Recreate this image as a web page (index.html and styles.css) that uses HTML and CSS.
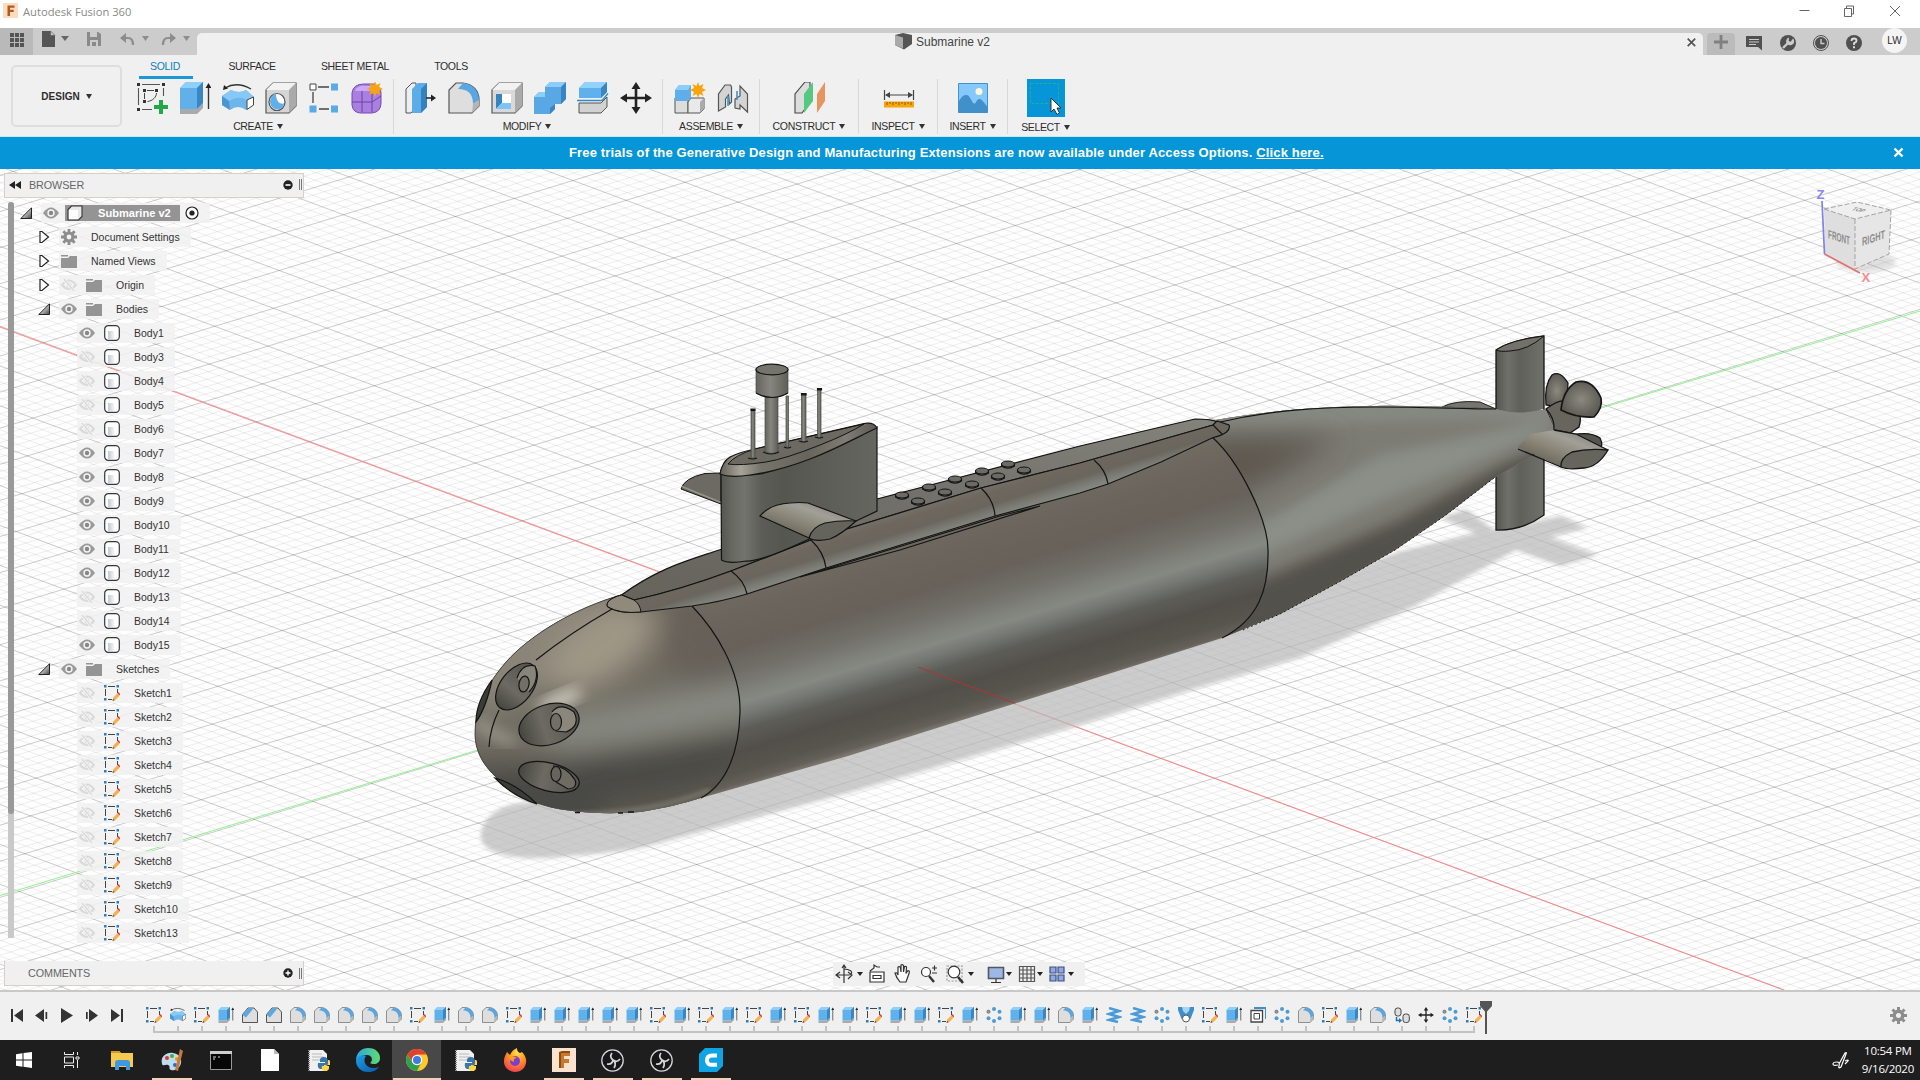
FILE: index.html
```html
<!DOCTYPE html>
<html lang="en">
<head>
<meta charset="utf-8">
<title>Autodesk Fusion 360</title>
<link rel="stylesheet" href="styles.css">
</head>
<body>
<svg class="defs" width="0" height="0">
  <defs>
    <linearGradient id="tri" x1="0" y1="0" x2="1" y2="1"><stop offset=".3" stop-color="#eee"/><stop offset="1" stop-color="#444"/></linearGradient>
    <linearGradient id="bodyFill"><stop offset="0" stop-color="#c5c8d2"/><stop offset="1" stop-color="#f4f4f6"/></linearGradient>
    <radialGradient id="fox" cx=".6" cy=".2" r=".9"><stop offset="0" stop-color="#ffe14a"/><stop offset=".4" stop-color="#ff9a1f"/><stop offset="1" stop-color="#f0305a"/></radialGradient>
    <linearGradient id="edgeg" x1="0" y1="0" x2="1" y2="1"><stop offset="0" stop-color="#1ba0e8"/><stop offset="1" stop-color="#0c59a4"/></linearGradient>
    <linearGradient id="edgeg2" x1="0" x2="1"><stop offset="0" stop-color="#2ba7e6"/><stop offset="1" stop-color="#5fdc6c"/></linearGradient>
  </defs>
  <!-- ribbon -->
  <symbol id="r-sketch" viewBox="0 0 32 32"><path d="M6 2.500h18M2.500 6v17M27.500 6v8M6 27.500h10" fill="none" stroke="#555" stroke-width="1.100"/><path d="M11 8.500h7M8.500 11v6M20.500 11c0 4-4 8-9 8.500" fill="none" stroke="#444"/><path d="M1 1h3v3H1zM26 1h3v3h-3zM1 26h3v3H1zM7 7h3v3H7zM19 7h3v3h-3zM7 18h3v3H7z" fill="#333"/><path d="M23 18h4v5h5v4h-5v5h-4v-5h-5v-4h5z" fill="#20a84b"/></symbol>
  <symbol id="r-extrude" viewBox="0 0 32 32"><path d="M1 27h17l6-6v5l-6 6H1z" fill="#aaa"/><path d="M1 6l6-6h17v21l-6 6H1z" fill="#62b0ea"/><path d="M1 6l6-6h17l-6 6z" fill="#8fd0fb"/><path d="M18 6l6-6v21l-6 6z" fill="#3a86c4"/><path d="M29.500 27V4" stroke="#333" stroke-width="1.400"/><path d="M26.500 6l3-5 3 5z" fill="#222"/></symbol>
  <symbol id="r-revolve" viewBox="0 0 32 32"><path d="M3 6q12-7 26 1" fill="none" stroke="#333" stroke-width="1.400"/><path d="M1 8l1-5 4 3.500z" fill="#222"/><path d="M0 14l9-6q8 4 15 0l8 7v8l-8 5q-8-6-16 0l-8-5z" fill="#6db6ec"/><path d="M0 14l9-6q8 4 15 0l8 7-7 3q-9-5-18 1z" fill="#86c9f7"/><path d="M0 14l7 5 1 9-8-5z" fill="#4a96d2"/><path d="M25 18l6.500-3v8l-6.500 4.500z" fill="#fff" stroke="#444"/></symbol>
  <symbol id="r-hole" viewBox="0 0 32 32"><path d="M1 8l7-7h23v23l-7 7H1z" fill="#d5d5d5" stroke="#555" stroke-width="1.200"/><path d="M1 8l7-7h23l-7 7z" fill="#f2f2f2"/><path d="M24 8l7-7v23l-7 7z" fill="#aaa"/><ellipse cx="12" cy="20" rx="8" ry="8.500" fill="#fff" stroke="#555" stroke-width="1.200"/><path d="M11 12c-8 2-8 14 1 15.500 4 0 7-3 7-6-5 1-8-3-8-9.500z" fill="#62b0ea"/></symbol>
  <symbol id="r-pattern" viewBox="0 0 32 32"><path d="M10 5h11M5 10v11M11 27h10" fill="none" stroke="#444" stroke-width="1.300"/><path d="M2 2h6v6H2z" fill="#fff" stroke="#444"/><path d="M23 1.500h7v7h-7zM1.500 23.500h7v7h-7zM23 23.500h7v7h-7z" fill="#5aaae6"/></symbol>
  <symbol id="r-form" viewBox="0 0 32 32"><path d="M1 11q1-9 12-9h9q8 2 8 9v10q0 9-9 10H10q-8 0-9-8z" fill="#a97fe0" stroke="#7848b4"/><path d="M1 20h20l9-6M11 9v21M21 10v20" fill="none" stroke="#6b42a8"/><path d="M4 8q4-5 10-4h8l-3 5H5z" fill="#cba9f6"/><use href="#star" x="16" y="-1" width="16" height="16"/></symbol>
  <symbol id="star" viewBox="0 0 16 16"><path d="M8 0l1.500 4L13.500 2 12 6l4 2-4 2 1.500 4-4-2L8 16l-1.500-4-4 2L4 10 0 8l4-2-1.500-4 4 2z" fill="#f8a410"/></symbol>
  <symbol id="r-press" viewBox="0 0 32 32"><path d="M1 7l6-6h4v24l-5 6H1z" fill="#eee" stroke="#555"/><path d="M7 7l6-6h9v24l-6 6H7z" fill="#5dacea"/><path d="M16 7l6-6v24l-6 6z" fill="#3580bd"/><path d="M21 16h8" stroke="#222" stroke-width="1.500"/><path d="M26 12.500l5 3.500-5 3.500z" fill="#222"/></symbol>
  <symbol id="r-fillet" viewBox="0 0 32 32"><path d="M1 31V8l7-7h7c10 1 16 8 16 17v6l-7 7z" fill="#dedede" stroke="#555" stroke-width="1.200"/><path d="M15 1c10 1 16 8 16 17l-6 4c0-10-5-15-15-15z" fill="#58a6e2"/><path d="M25 22l6-4v6l-7 7z" fill="#b5b5b5"/></symbol>
  <symbol id="r-shell" viewBox="0 0 32 32"><path d="M1 8l7-7h23v23l-7 7H1z" fill="#d9d9d9" stroke="#555" stroke-width="1.200"/><path d="M1 8l7-7h23l-7 7z" fill="#f2f2f2"/><path d="M24 8l7-7v23l-7 7z" fill="#aaa"/><path d="M5 12h15v15H5z" fill="#fff"/><path d="M5 12h6v9l-6 6z" fill="#3583c2"/><path d="M5 27l6-6h9v6z" fill="#7cc3f6"/></symbol>
  <symbol id="r-combine" viewBox="0 0 32 32"><path d="M0 15l5-5h6V5l5-5h16v17l-5 5h-6v5l-5 5H0z" fill="#59a8e4"/><path d="M11 5l5-5h16l-5 5zM0 15l5-5h6v5z" fill="#8dcdf9"/><path d="M27 5l5-5v17l-5 5zM16 26l5-4v5l-5 5z" fill="#3985c3"/></symbol>
  <symbol id="r-split" viewBox="0 0 32 32"><path d="M2 6l6-6h22v10l-6 6H2z" fill="#5fb0ec"/><path d="M2 6l6-6h22l-6 6z" fill="#92d2fb"/><path d="M24 6l6-6v10l-6 6z" fill="#3a86c4"/><path d="M0 18.500h25l6-7" fill="none" stroke="#2f8ccb" stroke-width="1.400"/><path d="M2 21h22l6-6v10l-6 6H2z" fill="#d2d2d2" stroke="#555"/></symbol>
  <symbol id="r-move" viewBox="0 0 32 32"><path d="M16 4v24M4 16h24" stroke="#222" stroke-width="2.600"/><path d="M16 0l4.500 7h-9zM16 32l4.500-7h-9zM0 16l7-4.500v9zM32 16l-7-4.500v9z" fill="#222"/></symbol>
  <symbol id="r-comp" viewBox="0 0 32 32"><path d="M1 16h13v15H1z" fill="#ddd" stroke="#555"/><path d="M14 20l3-4h13v11l-4 4H14z" fill="#e9e9e9" stroke="#555"/><path d="M26 20l4-4v11l-4 4z" fill="#aaa"/><path d="M1 8l4-5h12v13l-3 3H1z" fill="#5faee9"/><path d="M1 8l4-5h12l-3 5z" fill="#8dcdf9"/><use href="#star" x="16" y="0" width="16" height="16"/></symbol>
  <symbol id="r-joint" viewBox="0 0 32 32"><path d="M1.500 29V12L8 3h5.500l1 2v15l-2 2-1-9-3 4v8z" fill="#d4d4d4" stroke="#555" stroke-width="1.200"/><path d="M30.500 30V12L23 4v10l-5 3v9l5 1v-4z" fill="#d4d4d4" stroke="#555" stroke-width="1.200"/><path d="M11 14v10M20 9v9" stroke="#3b93d4" stroke-width="1.600"/></symbol>
  <symbol id="r-construct" viewBox="0 0 32 32"><path d="M1 31V12L11 0h5v20L8 31z" fill="#ddd" stroke="#444" stroke-width="1.100"/><path d="M10 12l9-12v19l-9 12z" fill="#55c980"/><path d="M23 12l8-12v19l-8 12z" fill="#e8945e"/></symbol>
  <symbol id="r-inspect" viewBox="0 0 32 32"><path d="M1.500 8v10M30.500 8v10M3 13h26" stroke="#444" stroke-width="1.200"/><path d="M2 13l5-3v6zM30 13l-5-3v6z" fill="#444"/><path d="M1 19.500h30v6H1z" fill="#f9a60c"/><path d="M4 20v3M7 20v2M10 20v3M13 20v2M16 20v3M19 20v2M22 20v3M25 20v2M28 20v3" stroke="#8a5a00"/></symbol>
  <symbol id="r-insert" viewBox="0 0 32 32"><path d="M1.500 1.500h29v29h-29z" fill="#86c8fb" stroke="#3e93d0"/><circle cx="22" cy="9.500" r="3.500" fill="#fff8d8"/><path d="M1.500 20q4-8 8-7c4 0 6 11 9 8 3-6 5-6 12 4v5.500h-29z" fill="#4190ca"/></symbol>
  <symbol id="r-select" viewBox="0 0 38 38"><path d="M3.500 4.500h28v20h-28z" fill="none" stroke="#2fb08c" stroke-dasharray="3 1.500" opacity=".75"/><path d="M24 19v14l3-3 3 5.500 2.500-1.500-2.500-5h4z" fill="#fff" stroke="#222" stroke-width=".9"/></symbol>
  <!-- browser tree -->
  <symbol id="eye" viewBox="0 0 16 12"><path d="M0 6q8-11 16 0-8 11-16 0z" fill="#999"/><circle cx="8" cy="6" r="3.700" fill="#f4f4f4"/><circle cx="8" cy="6" r="2.200" fill="#888"/></symbol>
  <symbol id="hidden" viewBox="0 0 16 12"><path d="M1 6q7-9 14 0-7 8-14 0z" fill="none" stroke="#dadada" stroke-width="2"/><circle cx="8" cy="6" r="2.500" fill="#dedede"/><path d="M3 0l10 12" stroke="#f4f4f4" stroke-width="3"/><path d="M3 0l10 12" stroke="#d8d8d8" stroke-width="1.300"/></symbol>
  <symbol id="body" viewBox="0 0 16 16"><rect x=".7" y=".7" width="14.600" height="14.600" rx="3.600" fill="#fff" stroke="#34373d" stroke-width="1.200"/><rect x="4" y="6" width="6" height="8" fill="url(#bodyFill)"/></symbol>
  <symbol id="cube" viewBox="0 0 16 16"><path d="M1 4.500L4.500 1H15v10.500L11.500 15H1z" fill="#e8e8e8" stroke="#333" stroke-width="1.100"/><path d="M2 5h9v9H2z" fill="#fff"/></symbol>
  <symbol id="folder" viewBox="0 0 16 14"><path d="M0 1h7v1.600H0zM0 4h7l2-2h7v12H0z" fill="#949494"/></symbol>
  <symbol id="gear" viewBox="0 0 16 16"><circle cx="8" cy="8" r="4" fill="none" stroke="#8d8d8d" stroke-width="3.200"/><path d="M8 0v3M8 13v3M0 8h3M13 8h3M2.300 2.300l2.200 2.200M11.500 11.500l2.200 2.200M2.300 13.700l2.200-2.200M11.500 4.500l2.200-2.200" stroke="#8d8d8d" stroke-width="2.800"/></symbol>
  <symbol id="closed" viewBox="0 0 12 14"><path d="M2 1.500h2l6.500 5.500L4 12.500H2z" fill="#fff" stroke="#222" stroke-width="1.200"/></symbol>
  <symbol id="open" viewBox="0 0 12 12"><path d="M11.500 .8v10.700H.8z" fill="url(#tri)" stroke="#222"/></symbol>
  <symbol id="sketch" viewBox="0 0 16 16"><path d="M4 1.500h7M1.500 4v7M13.500 4v4M4 14.500h4" fill="none" stroke="#444"/><path d="M0 0h2.500v2.500H0zM12.500 0H15v2.500h-2.500zM0 13h2.500v2.500H0z" fill="#2d7cc0"/><path d="M8.500 15.800l1-3.600 4-4 2.300 2.300-4.500 4.500z" fill="#f5b14b"/><path d="M13.300 8l1-1 2 2.200-1 1z" fill="#dd3a4a"/><path d="M8.500 16l.6-2.200 1.500 1.500z" fill="#555"/></symbol>
  <!-- timeline -->
  <symbol id="chamfer" viewBox="0 0 32 32"><path d="M1 31V15L12 2h12l7 8v21z" fill="#dedede" stroke="#555" stroke-width="2"/><path d="M1 16L13 2l9 2L8 21z" fill="#5aa9e4"/></symbol>
  <symbol id="circ" viewBox="0 0 16 16"><g fill="#4d9ad6"><circle cx="8" cy="2" r="2"/><circle cx="13.500" cy="4.700" r="2"/><circle cx="13.500" cy="11.300" r="2"/><circle cx="8" cy="14" r="2"/><circle cx="2.500" cy="11.300" r="2"/></g><circle cx="2.500" cy="4.700" r="1.600" fill="#999" stroke="#666" stroke-width=".7"/></symbol>
  <symbol id="coil" viewBox="0 0 16 16"><path d="M3 1l10 3-10 3 10 3-10 3 9 2" fill="none" stroke="#4a9bd8" stroke-width="2.500"/></symbol>
  <symbol id="loft" viewBox="0 0 16 16"><path d="M0 0h16v3l-3.500 9h-9L0 3z" fill="#3f8dca"/><path d="M4 0h8l-1 4-3 3-3-3z" fill="#a5d4f5"/><circle cx="8" cy="11.500" r="3.500" fill="#fff" stroke="#555"/></symbol>
  <symbol id="offset" viewBox="0 0 16 16"><path d="M4 1h12v11" fill="none" stroke="#3f8fcc" stroke-width="2"/><path d="M1 3.500h11.500V15H1z" fill="#fff" stroke="#444" stroke-width="1.300"/><path d="M4 6.500h5.500V12H4z" fill="none" stroke="#444"/></symbol>
  <symbol id="align" viewBox="0 0 16 16"><rect x="1" y="1" width="6" height="8" rx="2.500" fill="#ddd" stroke="#444"/><rect x="9" y="7" width="6.300" height="8.500" rx="2.500" fill="#ddd" stroke="#444"/><path d="M2.500 10v3.500H6" fill="none" stroke="#1d6fb0" stroke-width="1.500"/><path d="M5 11l3 2.500L5 16z" fill="#1d6fb0"/></symbol>
</svg>

<header class="titlebar">
  <svg width="15" height="15" viewBox="0 0 15 15"><path d="M0 0h15v15H0z" fill="#fbdcc3"/><path d="M4.500 13V2.500h7v2.300H7v2h3.700V9H7v4z" fill="#b25a1a"/></svg>
  <span class="app-name">Autodesk Fusion 360</span>
  <svg class="winbtns" width="106" height="14" viewBox="0 0 106 14" fill="none" stroke="#666"><path d="M1.500 6.500h10M46.500 4.500h7v8h-7zM48.500 4.500v-2.500h7v8h-2M92 2l10 10M102 2L92 12"/></svg>
</header>

<div class="appbar">
  <div class="grid-btn"><svg width="14" height="14" viewBox="0 0 14 14" fill="#555"><path d="M0 0h4v4H0zM5 0h4v4H5zM10 0h4v4h-4zM0 5h4v4H0zM5 5h4v4H5zM10 5h4v4h-4zM0 10h4v4H0zM5 10h4v4H5zM10 10h4v4h-4z"/></svg></div>
  <svg class="quick" width="150" height="22" viewBox="0 0 150 22"><path d="M0 3h8l5 4.500V19H0z" fill="#555"/><path d="M8.500 3v4.500H13z" fill="#ccc" stroke="#555" stroke-width=".6"/><path d="M19 8h8l-4 5z" fill="#666"/><path d="M45 4h11l3 2v12H45z" fill="#8a8a8a"/><path d="M48 4h7v5h-7zM48 12h8v6h-8z" fill="#ccc"/><path d="M50 14h4v4h-4z" fill="#8a8a8a"/><g fill="none" stroke="#8d8d8d" stroke-width="2.200"><path d="M81 10h5q5 0 5 7M131 10h-5q-5 0-5 7"/></g><path d="M78 10l6-5v10zM134 10l-6-5v10zM100 8h7l-3.500 5zM141 8h7l-3.500 5z" fill="#8d8d8d"/></svg>
  <div class="doc-tab">
    <svg width="17" height="17" viewBox="0 0 17 17"><path d="M0 2l8-2 9 2v9l-8 5.500L0 12z" fill="#555"/><path d="M0 2l8 2.500v11L0 12z" fill="#aaa"/></svg>
    <span>Submarine v2</span>
    <svg class="tab-x" width="9" height="9" viewBox="0 0 9 9" stroke="#555" stroke-width="1.700"><path d="M.7.7l7.500 7.500M8.200.7L.7 8.200"/></svg>
  </div>
  <div class="plus"><svg width="14" height="14" viewBox="0 0 14 14"><path d="M7 0v14M0 7h14" stroke="#808080" stroke-width="2.800"/></svg></div>
  <div class="app-icons">
    <svg width="17" height="16" viewBox="0 0 17 16"><path d="M0 1h16v11l0 3.500-4-3.500H0z" fill="#505050"/><path d="M3 4.500h10M3 7h10M3 9.500h7" stroke="#ccc" stroke-width="1.200"/></svg>
    <svg width="16" height="16" viewBox="0 0 16 16"><circle cx="8" cy="8" r="8" fill="#505050"/><path d="M3 13l6-6" stroke="#ccc" stroke-width="2.400"/><path d="M13 3.500a4 4 0 1 1-4-1L8.700 6l2 .8z" fill="#ccc"/></svg>
    <svg width="16" height="16" viewBox="0 0 16 16"><circle cx="8" cy="8" r="7.500" fill="none" stroke="#505050"/><circle cx="8" cy="8" r="6" fill="#505050"/><path d="M8 4v4.500h3.500" fill="none" stroke="#ccc" stroke-width="1.400"/></svg>
    <svg width="16" height="16" viewBox="0 0 16 16"><circle cx="8" cy="8" r="8" fill="#505050"/><path d="M5.500 6q0-2.500 2.500-2.500t2.500 2.200Q10.500 7.200 8 8.200V10" fill="none" stroke="#ddd" stroke-width="1.800"/><path d="M7 11.300h2v2H7z" fill="#ddd"/></svg>
  </div>
  <div class="avatar">LW</div>
</div>

<div class="ribbon">
  <div class="design"><span>DESIGN</span><i class="dd"></i></div>
  <div class="ribbon-main">
    <nav class="tabs"><span class="tab on">SOLID</span><span class="tab t2">SURFACE</span><span class="tab t3">SHEET METAL</span><span class="tab t4">TOOLS</span></nav>
    <div class="groups">
      <section class="group g-create"><div class="tools"><svg><use href="#r-sketch"/></svg><svg><use href="#r-extrude"/></svg><svg><use href="#r-revolve"/></svg><svg><use href="#r-hole"/></svg><svg><use href="#r-pattern"/></svg><svg><use href="#r-form"/></svg></div><p>CREATE<i class="dd"></i></p></section>
      <section class="group g-modify"><div class="tools"><svg><use href="#r-press"/></svg><svg><use href="#r-fillet"/></svg><svg><use href="#r-shell"/></svg><svg><use href="#r-combine"/></svg><svg><use href="#r-split"/></svg><svg><use href="#r-move"/></svg></div><p>MODIFY<i class="dd"></i></p></section>
      <section class="group g-assemble"><div class="tools"><svg><use href="#r-comp"/></svg><svg><use href="#r-joint"/></svg></div><p>ASSEMBLE<i class="dd"></i></p></section>
      <section class="group g-construct"><div class="tools"><svg><use href="#r-construct"/></svg></div><p>CONSTRUCT<i class="dd"></i></p></section>
      <section class="group g-inspect"><div class="tools"><svg><use href="#r-inspect"/></svg></div><p>INSPECT<i class="dd"></i></p></section>
      <section class="group g-insert"><div class="tools"><svg><use href="#r-insert"/></svg></div><p>INSERT<i class="dd"></i></p></section>
      <section class="group g-select"><div class="tools"><svg class="sel"><use href="#r-select"/></svg></div><p>SELECT<i class="dd"></i></p></section>
    </div>
  </div>
</div>

<div class="banner"><p>Free trials of the Generative Design and Manufacturing Extensions are now available under Access Options. <a>Click here.</a></p>
  <svg class="banner-x" width="11" height="11" viewBox="0 0 11 11" stroke="#fff" stroke-width="2.400"><path d="M1.500 1.500l8 8M9.500 1.500l-8 8"/></svg></div>

<main class="viewport">
  <svg class="scene" viewBox="0 169 1920 821" width="1920" height="821">
    <defs>
      <linearGradient id="hull" gradientUnits="userSpaceOnUse" x1="226.300" y1="740.900" x2="283.200" y2="927.300">
        <stop offset="0" stop-color="#716c62"/><stop offset=".15" stop-color="#6a645c"/><stop offset=".31" stop-color="#67615a"/><stop offset=".44" stop-color="#72706a"/><stop offset=".53" stop-color="#7f817a"/><stop offset=".585" stop-color="#858982"/><stop offset=".64" stop-color="#767974"/><stop offset=".72" stop-color="#5d5d58"/><stop offset=".82" stop-color="#524f4a"/><stop offset=".92" stop-color="#58544e"/><stop offset=".975" stop-color="#65605a"/><stop offset="1" stop-color="#7c776e"/>
      </linearGradient>
      <linearGradient id="strip" gradientUnits="userSpaceOnUse" x1="218.400" y1="715.100" x2="229.500" y2="751.400">
        <stop offset="0" stop-color="#7a776f"/><stop offset=".35" stop-color="#6d675e"/><stop offset=".65" stop-color="#6b665d"/><stop offset=".85" stop-color="#7a7b74"/><stop offset="1" stop-color="#84877f"/>
      </linearGradient>
      <linearGradient id="deck" x1="0" y1="1" x2="1" y2="0"><stop offset="0" stop-color="#66635b"/><stop offset=".5" stop-color="#716f69"/><stop offset="1" stop-color="#83837c"/></linearGradient>
      <linearGradient id="sail"><stop offset="0" stop-color="#55554f"/><stop offset=".07" stop-color="#686862"/><stop offset=".15" stop-color="#74746e"/><stop offset=".26" stop-color="#5d5d57"/><stop offset=".4" stop-color="#565650"/><stop offset="1" stop-color="#65665f"/></linearGradient>
      <linearGradient id="rim" gradientUnits="userSpaceOnUse" x1="722" y1="0" x2="877" y2="0"><stop offset="0" stop-color="#6c685f"/><stop offset=".12" stop-color="#a7a398"/><stop offset=".25" stop-color="#77746b"/><stop offset=".55" stop-color="#68645c"/><stop offset=".8" stop-color="#7e7c74"/><stop offset="1" stop-color="#5a5a54"/></linearGradient>
      <linearGradient id="mast"><stop offset="0" stop-color="#65655f"/><stop offset=".45" stop-color="#86867f"/><stop offset="1" stop-color="#5f5f59"/></linearGradient>
      <linearGradient id="fin" x1="0" y1="1" x2="1" y2="0"><stop offset=".1" stop-color="#5c584f"/><stop offset=".45" stop-color="#8c877a"/><stop offset=".65" stop-color="#a19f97"/><stop offset="1" stop-color="#716f67"/></linearGradient>
      <linearGradient id="rudder"><stop offset="0" stop-color="#555650"/><stop offset=".25" stop-color="#6f706a"/><stop offset=".5" stop-color="#5f605a"/><stop offset="1" stop-color="#70716b"/></linearGradient>
      <radialGradient id="blade"><stop offset="0" stop-color="#8d897f"/><stop offset="1" stop-color="#5d5b55"/></radialGradient>
      <linearGradient id="tube"><stop offset="0" stop-color="#45453f"/><stop offset=".4" stop-color="#6c6a62"/><stop offset="1" stop-color="#55534e"/></linearGradient>
      <filter id="soft" x="-30%" y="-30%" width="160%" height="160%"><feGaussianBlur stdDeviation="7"/></filter>
      <filter id="softer" x="-50%" y="-50%" width="200%" height="200%"><feGaussianBlur stdDeviation="14"/></filter>
      <filter id="edge"><feGaussianBlur stdDeviation="2"/></filter>
      <clipPath id="hullClip"><path d="M621 595C575 608 530 635 506 662C482 690 475 712 475 735C476 765 500 785 536 803C560 812 600 815 640 812C665 808 685 803 701 798L848 756L1080 683L1222 638L1280 614L1339 582L1395 550L1446 515L1494 478L1530 457L1556 432L1546 410C1500 410 1430 405 1376 406C1320 406 1260 412 1216 420L1195 419L1080 446L877 499L722 550C690 562 650 580 621 595z"/></clipPath>
      <clipPath id="noseClip"><path d="M692 606C715 630 741 670 740 712C739 755 725 785 701 798L640 830H450V585L640 585z"/></clipPath>
      <clipPath id="tailClip"><path d="M1212 437C1240 462 1268 520 1268 550C1269 590 1258 620 1222 638L1240 650H1600V380H1180z"/></clipPath>
    </defs>
    <path class="minor" id="minorLines"/>
    <path class="major" id="majorLines"/>
    <path d="M0 327L1784 990" stroke="#ff8585" fill="none"/>
    <path d="M0 895.500L1920 311" stroke="#8cf58c" fill="none"/>
    <path filter="url(#edge)" opacity=".72" fill="#b9b9b9" d="M522 803C492 806 480 824 481 838C484 858 530 861 570 856C600 854 625 851 644 847L848 793L1080 725L1191 690L1302 657L1413 607L1516 550L1561 566L1598 555L1550 537L1588 528L1561 516L1494 530L1466 509L1441 518L1476 533L1398 552L1300 590L700 780z"/>

    <path d="M1442 407Q1455 400 1480 402L1496 409z" fill="#77766e" stroke="#222"/>
    <g stroke="#161616" stroke-width="1.300">
      <path d="M1496 470V530Q1522 531 1544 515V450z" fill="url(#rudder)"/>
      <path d="M1572 435Q1590 431 1600 438Q1604 446 1599 450z" fill="#55554f"/>
      <path d="M1546 405Q1544 385 1552 375Q1560 370 1568 383Q1568 395 1562 408z" fill="url(#blade)"/>
      <path d="M1546 409Q1558 400 1564 401Q1585 409 1579 427L1570 433L1554 430z" fill="#67655d"/>
      <path d="M1561 410Q1563 390 1576 382Q1592 378 1601 398Q1603 408 1594 417Q1576 418 1561 410z" fill="url(#blade)" stroke-width="1.700"/>
    </g>
    <g clip-path="url(#hullClip)">
      <path d="M440 390H1600V840H440z" fill="url(#hull)"/>
      <g clip-path="url(#noseClip)">
        <path d="M440 560H780V840H440z" fill="#706b61"/>
        <g filter="url(#softer)">
          <path d="M450 590L610 590L660 625L560 680L480 720z" fill="#8a8578"/>
          <path d="M660 600L780 590L780 690L690 690L660 650z" fill="#666059"/>
          <ellipse cx="602" cy="648" rx="62" ry="30" transform="rotate(-35 602 648)" fill="#9f9786"/>
          <path d="M530 722Q600 712 760 675V715Q650 742 560 748z" fill="#888b84"/>
          <path d="M440 765Q520 770 600 755L780 728V850H440z" fill="#494844"/>
          <path d="M600 800Q680 790 760 760V850H600z" fill="#5a564f"/>
        </g>
        <ellipse cx="560" cy="700" rx="24" ry="7" transform="rotate(-22 560 700)" fill="#d2cec4" filter="url(#soft)"/>
        <path d="M475 720Q490 735 515 742" stroke="#a29e92" stroke-width="9" fill="none" filter="url(#soft)"/>
        <path d="M560 815Q650 815 710 790" stroke="#77736a" stroke-width="5" fill="none" filter="url(#edge)"/>
      </g>
      <g clip-path="url(#tailClip)">
        <path d="M1180 380H1600V660H1180z" fill="#7c7b74"/>
        <g filter="url(#soft)">
          <path d="M1180 415L1300 400L1560 404V418L1360 422L1210 436z" fill="#878a83"/>
          <path d="M1180 582L1268 553L1380 502L1556 428L1540 422L1380 455L1268 520L1180 545z" fill="#8b8f88"/>
          <path d="M1180 610L1268 577L1400 520L1500 466L1560 440V520L1300 640L1180 670z" fill="#53514c"/>
        </g>
        <path d="M1170 450L1230 434L1340 438L1280 475L1170 530z" fill="#5f5850" filter="url(#softer)"/>
        <path d="M1225 642L1285 617L1395 555L1446 520" stroke="#77736a" stroke-width="5" fill="none" filter="url(#edge)"/>
      </g>
      <path d="M918 667L1080 727.500" stroke="#b03434" fill="none"/>
    </g>
    <g fill="none" stroke="#141414" stroke-width="1.200">
      <path d="M621 595C575 608 530 635 506 662C482 690 475 712 475 735C476 765 500 785 536 803" stroke-width=".8" stroke="#33332f"/>
      <path d="M692 606C715 630 741 670 740 712C739 755 725 785 701 798"/>
      <path d="M1212 437C1240 462 1268 520 1268 550C1269 590 1258 620 1222 638"/>
      <path d="M612 609Q570 633 536 660M499 710Q490 728 489 747"/>
      <path d="M1216 423C1270 410 1320 407 1376 407C1430 407 1460 409 1496 409"/>
      <path d="M1243 630L1280 614L1339 582L1395 550L1446 515L1494 478" stroke-dasharray="1.500 3" stroke-width="1"/>
      <path d="M575 812.500h5M618 813h5M628 812h6" stroke-width="1.500"/>
      <path d="M1546 409Q1555 418 1554 430"/>
    </g>

    <path d="M621.500 595C660 567 690 560 722 549L877 499L1080 446L1195 419Q1212 419 1217 422L1213 425L1080 463L981 488L811 540L731 571Q680 590 634 600z" fill="url(#deck)" stroke="#141414" stroke-width="1.200"/>
    <path d="M621.500 595C610 598 605 603 608 607Q620 614 641 612L692 606Q720 602 747 594L826 568L995 516L1080 493L1108 484L1161 462L1212 438Q1232 433 1229 425L1217 421L1213 425L1080 463L981 488L811 540L731 571Q680 590 634 600z" fill="url(#strip)" stroke="#141414" stroke-width="1.200"/>
    <path d="M621.500 595C610 598 605 603 608 607Q620 614 641 612Q640 604 634 600z" fill="#8f8a7b" stroke="#141414"/>
    <g fill="none" stroke="#141414" stroke-width="1.200"><path d="M731 571Q744 580 747 594M811 540Q824 552 826 568M981 488Q994 500 995 516M1094 460Q1106 470 1108 484M1213 425L1222 434M800 577L1000 516L1040 506L900 550z"/></g>
    <g id="hatches" fill="#6b6a64" stroke="#141414" stroke-width="1.100"></g>

    <path d="M681 489Q684 478 705 473.500L721 473V504z" fill="#6c6a62" stroke="#141414"/>
    <path d="M682 486.500L721 502.500" stroke="#99958b" stroke-width="1.500"/>
    <path d="M721 470L725 466Q735 478 760 474C800 465 850 440 877 427V511L856 521L807 540Q760 562 746 561Q728 564 721.500 560z" fill="url(#sail)" stroke="#141414" stroke-width="1.200"/>
    <path d="M720 474Q722 462 730 457Q740 452 755 449L864 423.500Q874 422 877 428C850 440 807 467 750 475Q730 478 720 474z" fill="url(#rim)" stroke="#141414" stroke-width="1.200"/>
    <path d="M728 464Q735 455 755 449L864 424Q848 434 820 445Q785 459 766 462Q740 466 728 464z" fill="#6b6962" stroke="#141414"/>
    <g stroke="#4a4a45" stroke-width=".7">
      <path d="M751 411h4v47h-4z" fill="url(#mast)"/><path d="M786 396h2.500v51H786z" fill="url(#mast)"/><path d="M801.500 394h4.500v48h-4.500z" fill="url(#mast)"/><path d="M817.500 389h3.500v49h-3.500z" fill="url(#mast)"/><path d="M765 395h13v57q-6 3-13 0z" fill="url(#mast)"/>
      <path d="M756 369v24q16 9 32 0v-24z" fill="url(#mast)"/>
    </g>
    <g stroke="#141414" stroke-width="1.200" fill="#74736c"><ellipse cx="772" cy="369.500" rx="16" ry="5.300"/><path d="M756 393q16 9 32 0M763 452q8 4 16 0M748 458q5 2 9 0M784 447q4 2 7 0M799 441q5 2 9 0M815 437q5 2 8 0" fill="none"/><path d="M751 409h4v1.500h-4zM801.500 393.500h4.500v1.500h-4.500zM817.500 388.500h4v1.500h-4z" fill="#222"/></g>
    <path d="M760 516Q770 504 790 503Q800 502 808 503L856 521L809 538z" fill="url(#fin)"/>
    <path d="M809 538L760 516Q770 504 790 503Q800 502 808 503L856 521" fill="none" stroke="#141414" stroke-width="1.200"/>
    <path d="M809 538Q812 527 825 523Q840 520 856 521Q842 534 830 539Q815 542 809 538z" fill="#64635c" stroke="#141414" stroke-width="1.200"/>

    <path d="M1496 350V409Q1520 416 1544 409V336Q1515 340 1496 350z" fill="url(#rudder)"/>
    <path d="M1496 409V350Q1510 340 1544 336V410" fill="none" stroke="#141414" stroke-width="1.300"/>
    <path d="M1496 350Q1510 340 1544 336Q1528 350 1510 351Q1500 352 1496 350z" fill="#72716a" stroke="#141414"/>
    <path d="M1518 447L1530 434L1554 430L1576 434L1608 450L1561 467z" fill="url(#fin)"/>
    <path d="M1554 430L1576 434L1608 450M1518 449L1561 467" fill="none" stroke="#141414" stroke-width="1.300"/>
    <path d="M1561 467Q1560 458 1572 452Q1588 448 1608 450Q1598 467 1584 468Q1568 470 1561 467z" fill="#66655d" stroke="#141414" stroke-width="1.300"/>

    <g stroke="#141414" stroke-width="1.200">
      <ellipse cx="516.500" cy="686.500" rx="27" ry="16" transform="rotate(-52 516.500 686.500)" fill="url(#tube)"/>
      <path d="M517 678Q522 663 535 666Q540 680 529 692" fill="#87847a"/><ellipse cx="524" cy="684" rx="5" ry="8" transform="rotate(10 524 684)" fill="#716f67"/>
      <ellipse cx="549" cy="724.500" rx="31" ry="20" transform="rotate(-18 549 724.500)" fill="url(#tube)"/>
      <path d="M552 712Q560 702 574 712Q581 726 566 732L556 731" fill="#8b877c"/><ellipse cx="556" cy="722" rx="5.500" ry="8.500" fill="#716f67"/>
      <ellipse cx="549" cy="777" rx="31" ry="14" transform="rotate(14 549 777)" fill="url(#tube)"/>
      <path d="M553 766Q566 766 575 780Q578 788 568 789L556 782" fill="#6e6b63"/><ellipse cx="556" cy="774" rx="5" ry="7.500" fill="#66645d"/>
      <path d="M492 680Q486 708 476 722Q476 702 492 680zM495 778Q517 784 537 804Q512 796 495 778z" fill="#3c3c37"/>
    </g>

    <g class="viewcube">
      <ellipse cx="1866" cy="262" rx="30" ry="10" fill="#999" opacity=".3" filter="url(#edge)"/>
      <path d="M1824 209L1857 202L1891 210L1855 219z" fill="#efefef"/><path d="M1824 209L1855 219V269L1825 254z" fill="#dedede"/><path d="M1855 219L1891 210L1889 254L1855 269z" fill="#e6e6e6"/>
      <path d="M1824 209L1857 202L1891 210L1855 219zM1855 219V269L1889 254L1891 210" fill="none" stroke="#a3a3a3" stroke-dasharray="5 2"/>
      <path d="M1822 201L1824.500 254" stroke="#8181ee" stroke-width="1.700"/><path d="M1824.500 254L1860 273" stroke="#e47070" stroke-width="1.700"/>
      <text transform="matrix(1 .32 0 1 1828 238)" textLength="22" lengthAdjust="spacingAndGlyphs">FRONT</text>
      <text transform="matrix(1 -.34 0 1 1862 246)" textLength="23" lengthAdjust="spacingAndGlyphs">RIGHT</text>
      <text transform="matrix(.9 .2 -.5 .35 1851 210)" textLength="13" lengthAdjust="spacingAndGlyphs">TOP</text>
      <text class="ax z" x="1816.500" y="199">Z</text><text class="ax x" x="1861.500" y="282">X</text>
    </g>
  </svg>

  <aside class="browser">
    <div class="panel-head"><svg width="12" height="8" viewBox="0 0 12 8"><path d="M6 0v8L0 4zM12 0v8L6 4z" fill="#222"/></svg><span>BROWSER</span><svg class="pm" width="10" height="10" viewBox="0 0 10 10"><circle cx="5" cy="5" r="4.700" fill="#222"/><path d="M2.500 5h5" stroke="#fff" stroke-width="1.600"/></svg><i class="grip"></i></div>
    <div class="tree-wrap"><div class="scroll"><i></i></div><ul class="tree" id="tree"></ul></div>
  </aside>
  <div class="bottom-row">
    <div class="panel-head comments"><span>COMMENTS</span><svg class="pm" width="10" height="10" viewBox="0 0 10 10"><circle cx="5" cy="5" r="4.700" fill="#222"/><path d="M2.500 5h5M5 2.500v5" stroke="#fff" stroke-width="1.400"/></svg><i class="grip"></i></div>
    <div class="navbar">
      <svg width="252" height="24" viewBox="833 962 252 24" fill="none" stroke="#333" stroke-width="1.200">
        <path d="M844 965v18M842 968l2-3 2 3M837 975h12q4-1 2-4-3-2-7-2M840 972l-4 3 4 3M848 972l4 3-4 4"/>
        <path d="M870 972h14v10h-14zM873 975.500h8v3h-8zM870 971l4-3v-3l3 2h3" fill="#fff"/>
        <path d="M900 982q-4-5-5-9 2-1 3 2v-8q2-1 2.500 1l.5 4v-7q2-1 2.500 1v6l1-5.500q2-.5 2 1l-.5 6 2-3q2 0 1 3l-3 8.500z" fill="#fff"/>
        <circle cx="926" cy="972" r="4.500" fill="#fff"/><path d="M929 976l5 6" stroke-width="2.400"/><path d="M932 968h5M934.500 965.500v5M932 973h5"/>
        <path d="M947 966h15v15h-15z" stroke="#999" stroke-dasharray="2 1.500"/><circle cx="954" cy="972" r="5.800" fill="#fff"/><path d="M958 977l5 6" stroke-width="2.600"/>
        <path d="M988.500 967.500h15v11h-15z" fill="#9db8e4" stroke="#556" stroke-width="1.600"/><path d="M996 979v3M991 982.500h10"/>
        <path d="M1019.500 966.500h15v15h-15zM1023 967v15M1027 967v15M1031 967v15M1020 970h15M1020 974h15M1020 978h15" stroke="#555"/>
        <path d="M1050 967h6v6h-6zM1058 967h6v6h-6zM1050 975h6v6h-6zM1058 975h6v6h-6z" fill="#8fa9e0" stroke="#3d5181"/>
        <path d="M857 972h6l-3 4zM968 972h6l-3 4zM1006 972h6l-3 4zM1037 972h6l-3 4zM1068 972h6l-3 4z" fill="#222" stroke="none"/>
      </svg>
    </div>
  </div>
</main>

<div class="timeline">
  <svg class="play" width="120" height="18" viewBox="6 1007 120 18" fill="#333"><path d="M11 1010h2v13h-2zM23 1010v13l-9-6.500zM44 1010v13l-9-6.500zM45.500 1013h1.700v7h-1.700zM61 1009l12 7.500-12 7.500zM86 1013h1.700v7H86zM89 1010v13l9-6.500zM111 1010v13l9-6.500zM121 1010h2v13h-2z"/></svg>
  <ol class="steps" id="steps"></ol>
  <svg class="marker" width="12" height="33" viewBox="0 0 12 33"><path d="M0 0h12v5L7 10.500V33H5V10.500L0 5z" fill="#555"/></svg>
  <svg class="tl-gear" width="17" height="17"><use href="#gear"/></svg>
</div>

<footer class="taskbar">
  <div class="task sys"><svg width="16" height="16" viewBox="0 0 16 16" fill="#fff"><path d="M0 2.300l6.500-1v6.200H0zM7.500 1.100L16 0v7.500H7.500zM0 8.500h6.500v6.200L0 13.800zM7.500 8.500H16V16l-8.500-1.200z"/></svg></div>
  <div class="task sys"><svg width="18" height="16" viewBox="0 0 18 16" fill="none" stroke="#eee"><path d="M1.500 0v2.500h9V0M1.500 5h9v6h-9zM1.500 16v-2.500h9V16M14.500 0v3M14.500 8v8M13 5h3v2h-3z"/></svg></div>
  <div class="task"><svg width="23" height="20" viewBox="0 0 23 20"><path d="M0 1h8l2 2h12v14H0z" fill="#f5ca4e"/><path d="M0 1h8l2 2H0z" fill="#d99a1c"/><path d="M4 20v-7q0-3 3-3h9q3 0 3 3v7h-4v-4H8v4z" fill="#3d9ae0"/></svg></div>
  <div class="task run"><svg width="24" height="24" viewBox="0 0 24 24"><path d="M2 16C0 8 7 4 13 5s9 5 8 10c-1 6-7 8-10 7-3-1 0-4-3-5-2-1-5 2-6-1z" fill="#bcdcf0"/><circle cx="7" cy="10" r="2" fill="#d33"/><circle cx="12" cy="8" r="2" fill="#4a4"/><circle cx="17" cy="11" r="2" fill="#e90"/><circle cx="15" cy="17" r="2" fill="#36c"/><path d="M20 1l3 2-5 20-3-1z" fill="#c5793c"/></svg></div>
  <div class="task"><svg width="22" height="19" viewBox="0 0 22 19"><path d="M.5.500h21v18H.5z" fill="#070707" stroke="#999"/><path d="M0 0h22v3H0z" fill="#ccc"/><path d="M3 6h3M8 6h2M3 8h2" stroke="#ddd"/></svg></div>
  <div class="task"><svg width="18" height="22" viewBox="0 0 18 22"><path d="M0 0h13l5 5v17H0z" fill="#fff"/><path d="M13 0v5h5z" fill="#bbb"/></svg></div>
  <div class="task"><svg width="22" height="23" viewBox="0 0 22 23"><g id="pyicon"><path d="M1 1h14l4 4v17H1z" fill="#f0f0f0"/><path d="M1 1v21" stroke="#888" stroke-width="2" stroke-dasharray="1 1"/><path d="M4 5h10M4 8h12M4 11h8" stroke="#bbb"/><path d="M16 8q-4 0-4 3v2h5v1h-7q-1 5 2 6h2v-3h4q3 0 2-4 0-5-4-5z" fill="#3a76ad"/><path d="M17 22q4 0 4-3v-2h-5v-1h6q1-4-1-5h-1v3q0 3-3 3h-3q-1 5 3 5z" fill="#ffd445"/></g></svg></div>
  <div class="task"><svg width="24" height="24" viewBox="0 0 24 24"><path d="M0 13C0 4 6 0 12 0c8 0 12 5 12 10 0 4-3 6-6 6-4 0-4-1-3-2 2-2 1-7-4-7C4 7 1 11 0 13z" fill="url(#edgeg2)"/><path d="M0 13C1 8 6 6 10 8c-4 5 0 13 9 12 1 0 3-1 4-1-2 3-6 5-11 5C5 24 0 19 0 13z" fill="url(#edgeg)"/></svg></div>
  <div class="task run active"><svg width="22" height="22" viewBox="0 0 22 22"><circle cx="11" cy="11" r="11" fill="#fbc92b"/><path d="M1.500 5.500A11 11 0 0 1 20.500 5.500H11L6.500 13.500z" fill="#df4030"/><path d="M1.500 5.500l5 8.500 8.500 0-4 8A11 11 0 0 1 1.500 5.500z" fill="#30a050"/><circle cx="11" cy="11" r="5.200" fill="#fff"/><circle cx="11" cy="11" r="4" fill="#3b7de0"/></svg></div>
  <div class="task"><svg width="22" height="23" viewBox="0 0 22 23"><use href="#pyicon"/></svg></div>
  <div class="task"><svg width="24" height="24" viewBox="0 0 24 24"><path d="M2 8l2-4 3 3q2-5 7-7 0 4 3 5l2-1q5 5 4 11c-1 6-6 9-11 9S1 20 1 14q0-4 1-6z" fill="url(#fox)"/><circle cx="12" cy="13" r="5" fill="#7b3fd0"/><path d="M6 9q5-2 8 1-4 0-3 4-4-1-5-5z" fill="#ff9a1f"/></svg></div>
  <div class="task run"><svg width="24" height="24" viewBox="0 0 24 24"><path d="M0 0h24v24H0z" fill="#fbe2cf"/><path d="M7 20V4h11v4h-6v3h5v4h-5v5z" fill="#c8782e"/><path d="M7 4l3-1h8v2H9v15H7z" fill="#8f4c12"/></svg></div>
  <div class="task run"><svg width="23" height="23" viewBox="0 0 23 23"><g id="obs"><circle cx="11.500" cy="11.500" r="10.700" fill="#17171a" stroke="#d5d5d5" stroke-width="1.300"/><path d="M11 4q-3 4 1 7t7-1M12 11q-1 5-6 4M12 11q4 3 1 8" fill="none" stroke="#d5d5d5" stroke-width="1.700"/></g></svg></div>
  <div class="task run"><svg width="23" height="23" viewBox="0 0 23 23"><use href="#obs"/></svg></div>
  <div class="task run"><svg width="24" height="24" viewBox="0 0 24 24"><path d="M6 0h18v18l-6 6H0V6z" fill="#0fa4e4"/><path d="M18 7.500h-5q-5 0-5 4.700t5 4.600h5" fill="none" stroke="#fff" stroke-width="4"/></svg></div>
  <div class="tray"><svg width="17" height="17" viewBox="0 0 17 17" fill="none" stroke="#fff" stroke-width="1.200"><path d="M6 13q-5 1-5-1t4-2q3 0 2 4-1 3 2 1l5-13q1-2-1-1L7 12M13 9q4-2 3 0l-3 3"/></svg><div class="clock"><span>10:54 PM</span><span>9/16/2020</span></div></div>
</footer>
<script src="script.js"></script>
</body>
</html>
```
FILE: styles.css
```css
* { box-sizing: border-box; }
body { margin: 0; width: 1920px; height: 1080px; overflow: hidden; display: flex; flex-direction: column; font-family: "Liberation Sans", Arial, sans-serif; font-size: 10.5px; color: #2d2d2d; background: #f0f0f0; }
p, ul, ol { margin: 0; padding: 0; list-style: none; }
svg { display: block; flex: none; }
.defs { position: absolute; }

.titlebar { height: 28px; background: #fff; display: flex; align-items: center; padding: 0 16px 7px 3px; gap: 5px; font: 11.2px "Open Sans", sans-serif; color: #8a8a8a; }
.app-name { padding-top: 1px; }
.winbtns { margin-left: auto; }

.appbar { height: 27px; background: #ccc; display: flex; align-items: stretch; }
.grid-btn { width: 33px; background: #b9b9b9; display: flex; align-items: center; justify-content: center; padding-bottom: 4px; }
.quick { margin: 0 5px 0 9px; }
.grid-btn svg { margin-top: 1px; }
.doc-tab { width: 1506px; margin-top: 5px; background: #f0f0f0; border-radius: 5px 5px 0 0; display: flex; align-items: center; padding: 0 7px 4px 698px; gap: 4px; font-size: 12px; color: #444; }
.doc-tab span { margin-top: -1px; }
.doc-tab svg { margin-top: -1px; }
.doc-tab .tab-x { margin-left: auto; margin-top: 0; }
.plus { width: 28px; margin: 5px 0 0 4px; background: #bbb; border-radius: 4px 4px 0 0; display: flex; align-items: center; justify-content: center; padding-bottom: 5px; }
.app-icons { display: flex; align-items: center; gap: 17px; margin-left: 11px; padding-top: 3px; }
.app-icons svg { margin-top: -1px; }
.avatar { width: 25px; height: 25px; margin: -2px 0 0 20px; border-radius: 50%; background: #f4f4f4; display: flex; align-items: center; justify-content: center; font-size: 10px; }
.app-icons, .avatar { align-self: center; }

.ribbon { height: 81px; display: flex; background: #f0f0f0; }
.design { width: 111px; height: 62px; margin: 10px 3px 0 11px; border: 2px solid #dedede; border-radius: 5px; display: flex; align-items: center; justify-content: center; gap: 6px; font-weight: bold; font-size: 10px; padding-top: 1px; }
.dd { border: 3px solid transparent; border-top: 5px solid #333; border-bottom: 0; }
.ribbon-main { display: flex; flex-direction: column; }
.tabs { display: flex; height: 24px; align-items: stretch; padding-left: 14px; font-size: 10.5px; letter-spacing: -.35px; }
.tab { width: 54px; text-align: center; padding-top: 5px; white-space: nowrap; }
.tab.on { color: #0b7fbd; border-bottom: 3px solid #1b98da; padding-right: 2px; }
.t2 { margin-left: 32px; }
.t3 { width: 90px; margin-left: 31px; }
.t4 { margin-left: 24px; }
.groups { display: flex; height: 57px; }
.group { display: flex; flex-direction: column; align-items: center; border-right: 1px solid #d8d8d8; height: 55px; }
.group:last-child { border: 0; }
.tools { display: flex; gap: 11px; height: 38px; align-items: center; padding-left: 1px; }
.tools svg { width: 32px; height: 32px; }
.tools svg.sel { width: 38px; height: 38px; background: #0696d7; }
.group p { display: flex; align-items: center; gap: 4px; font-size: 10.5px; letter-spacing: -.35px; line-height: 15px; margin-top: 3px; }
.g-create { width: 269px; } .g-modify { width: 269px; } .g-assemble { width: 97px; } .g-construct { width: 99px; } .g-inspect { width: 79px; } .g-insert { width: 70px; } .g-select { width: 75px; }
.g-modify p, .g-create p { margin-left: -2px; }

.banner { height: 33px; background: #0696d7; border-top: 1px solid #c2ecfa; display: flex; align-items: center; padding: 0 16px 1px 569px; color: #fff; font-weight: bold; font-size: 13px; letter-spacing: .15px; white-space: nowrap; }
.banner a { text-decoration: underline; }
.banner-x { margin-left: auto; }

.viewport { height: 821px; position: relative; background: #fefefe; display: flex; flex-direction: column; justify-content: space-between; }
.scene { position: absolute; left: 0; top: 0; }
.minor { stroke: #000; stroke-opacity: .065; fill: none; }
.major { stroke: #000; stroke-opacity: .2; fill: none; }
.viewcube text { font: bold 12px "Liberation Sans", sans-serif; fill: #8d8d8d; }
.viewcube .ax { font-size: 13px; }
.viewcube .z { fill: #8787f2; }
.viewcube .x { fill: #f58c8c; }

.browser { position: relative; width: 303px; padding: 4px 0 0 4px; }
.panel-head { width: 300px; height: 25px; background: #f0f0f0; border: 1px solid #d6cfcc; display: flex; align-items: center; padding: 0 1px 2px 4px; gap: 8px; font-size: 10.8px; letter-spacing: -.1px; color: #666; }
.panel-head .pm { margin-left: auto; }
.grip { width: 3px; height: 11px; border: solid #777; border-width: 0 1px; margin-left: -2px; }
.comments { margin-left: 4px; padding: 0 1px 0 24px; border-top: 0; }
.comments span { margin-left: -1px; }
.tree-wrap { display: flex; padding-left: 4px; }
.scroll { width: 6px; height: 736px; margin-top: 4px; background: #c9c9c9; border-radius: 3px 3px 0 0; }
.scroll i { display: block; height: 612px; background: #999; border-radius: 3px; }
.tree { padding-top: 3px; }
.row { display: flex; height: 24px; align-items: center; }
.row .arrow { width: 12px; height: 14px; margin-right: 9px; }
.row .arrow.open { height: 12px; }
.item { display: flex; height: 20px; align-items: center; background: rgba(241,241,241,.85); padding: 0 11px 0 2px; color: #333; white-space: nowrap; }
.item .eye { width: 16px; height: 12px; margin-right: 9px; }
.item .ico { width: 16px; height: 16px; }
.lv0 { padding-left: 6px; } .lv1 { padding-left: 24px; } .lv2 { padding-left: 63px; }
.lv0 .sel { display: flex; align-items: center; height: 16px; padding: 0 9px 0 2px; gap: 15px; margin: 0 5px 0 -3px; background: #949494; color: #fff; font-weight: bold; font-size: 11.1px; }
.lv1 .item .ico + span, .lv2 .item .ico + span { margin-left: 14px; }

.bottom-row { position: relative; display: flex; align-items: center; height: 27px; margin-bottom: 3px; }
.navbar { margin-left: 529px; background: #f0f0f0; }

.timeline { height: 50px; border-top: 2px solid #c8c8c8; background: #f0f0f0; display: flex; align-items: flex-start; }
.play { margin: 14px 16px 0 6px; }
.steps { display: flex; margin-top: 15px; }
.steps li { width: 24px; height: 26px; display: flex; flex-direction: column; align-items: center; justify-content: space-between; background: linear-gradient(#c3c3c3, #c3c3c3) 0 100% / 100% 2px no-repeat; }
.steps li:first-child { background-position: 12px 100%; background-size: 12px 2px; }
.steps li:last-child { background-size: 12px 2px; }
.steps li svg { width: 16px; height: 16px; }
.steps li::after { content: ""; width: 2px; height: 7px; background: #c3c3c3; }
.marker { margin: 9px 0 0 -6px; }
.tl-gear { margin: 15px 13px 0 auto; }

.taskbar { height: 40px; background: #1e1e1e; display: flex; }
.task { width: 49px; display: flex; align-items: center; justify-content: center; background-repeat: no-repeat; }
.task.sys { width: 48px; }
.task.sys + .task:not(.sys) { margin-left: 2px; }
.run { background-image: linear-gradient(#f5d0b8, #f5d0b8); background-size: 40px 2px; background-position: 50% 100%; }
.active { background-color: #484848; background-size: 48px 2px; }
.tray { margin-left: auto; display: flex; align-items: center; gap: 13px; padding-right: 6px; color: #fff; }
.clock { display: flex; flex-direction: column; align-items: center; font: 11.5px/18px "Open Sans", sans-serif; letter-spacing: -.25px; padding-bottom: 1px; }
```
FILE: script.js
```js
// Ground plane: one node of the grid and the two grid steps in screen space
const O = [1427.3, 857.3], U = [53.2, 19.8], V = [58.77, -18];

function gridPath(step, skipMajor, from, to) {
  let d = "";
  const n = Math.round(1 / step);
  for (let i = from * n; i <= to * n; i++) {
    if (skipMajor && i % n === 0) continue;
    const k = i / n;
    const a = [O[0] + U[0] * k, O[1] + U[1] * k];
    const b = [O[0] + V[0] * k, O[1] + V[1] * k];
    d += `M${(a[0] - V[0] * 60).toFixed(1)} ${(a[1] - V[1] * 60).toFixed(1)}L${(a[0] + V[0] * 60).toFixed(1)} ${(a[1] + V[1] * 60).toFixed(1)}`;
    d += `M${(b[0] - U[0] * 60).toFixed(1)} ${(b[1] - U[1] * 60).toFixed(1)}L${(b[0] + U[0] * 60).toFixed(1)} ${(b[1] + U[1] * 60).toFixed(1)}`;
  }
  return d;
}
document.getElementById("minorLines").setAttribute("d", gridPath(0.2, true, -45, 45));
document.getElementById("majorLines").setAttribute("d", gridPath(1, false, -45, 45));

// Vertical launch hatches on the deck
document.getElementById("hatches").innerHTML = [[902, 495], [929, 487], [955, 479], [982, 471], [1008, 464], [918, 501], [945, 492], [972, 484], [998, 476], [1024, 470]]
  .map(([x, y]) => `<path d="M${x - 6.5} ${y}v2q6.500 4.500 13 0v-2z"/><ellipse cx="${x}" cy="${y}" rx="6.500" ry="3"/>`).join("");

// Browser tree
const svg = (id, cls) => `<svg class="${cls}"><use href="#${id}"/></svg>`;
const row = (lv, arrow, inner) => `<li class="row lv${lv}">${arrow ? svg(arrow, "arrow " + arrow) : ""}<div class="item">${inner}</div></li>`;
const leaf = (icon, on, name) => row(2, "", svg(on ? "eye" : "hidden", "eye") + svg(icon, "ico") + `<span>${name}</span>`);
const shown = [1, 7, 8, 9, 10, 11, 12, 15];
let tree = row(0, "open", svg("eye", "eye") + `<div class="sel">${svg("cube", "ico")}<span>Submarine v2</span></div><svg width="14" height="14" viewBox="0 0 14 14"><circle cx="7" cy="7" r="6" fill="#fff" stroke="#222" stroke-width="1.200"/><circle cx="7" cy="7" r="2.600" fill="#222"/></svg>`);
tree += row(1, "closed", svg("gear", "ico") + "<span>Document Settings</span>");
tree += row(1, "closed", svg("folder", "ico") + "<span>Named Views</span>");
tree += row(1, "closed", svg("hidden", "eye") + svg("folder", "ico") + "<span>Origin</span>");
tree += row(1, "open", svg("eye", "eye") + svg("folder", "ico") + "<span>Bodies</span>");
for (const n of [1, 3, 4, 5, 6, 7, 8, 9, 10, 11, 12, 13, 14, 15]) tree += leaf("body", shown.includes(n), "Body" + n);
tree += row(1, "open", svg("eye", "eye") + svg("folder", "ico") + "<span>Sketches</span>");
for (const n of [1, 2, 3, 4, 5, 6, 7, 8, 9, 10, 13]) tree += leaf("sketch", false, "Sketch" + n);
document.getElementById("tree").innerHTML = tree;

// Timeline features
const kinds = { S: "sketch", R: "r-revolve", E: "r-extrude", K: "chamfer", F: "r-fillet", P: "circ", C: "coil", L: "loft", H: "offset", G: "align", M: "r-move" };
document.getElementById("steps").innerHTML = [..."SRSEKKFFFFFSEFFSEEEEESESESESEESEESEPEEFECCPLSEHPFSEFGMPS"]
  .map(k => `<li>${svg(kinds[k], "")}</li>`).join("");
```
